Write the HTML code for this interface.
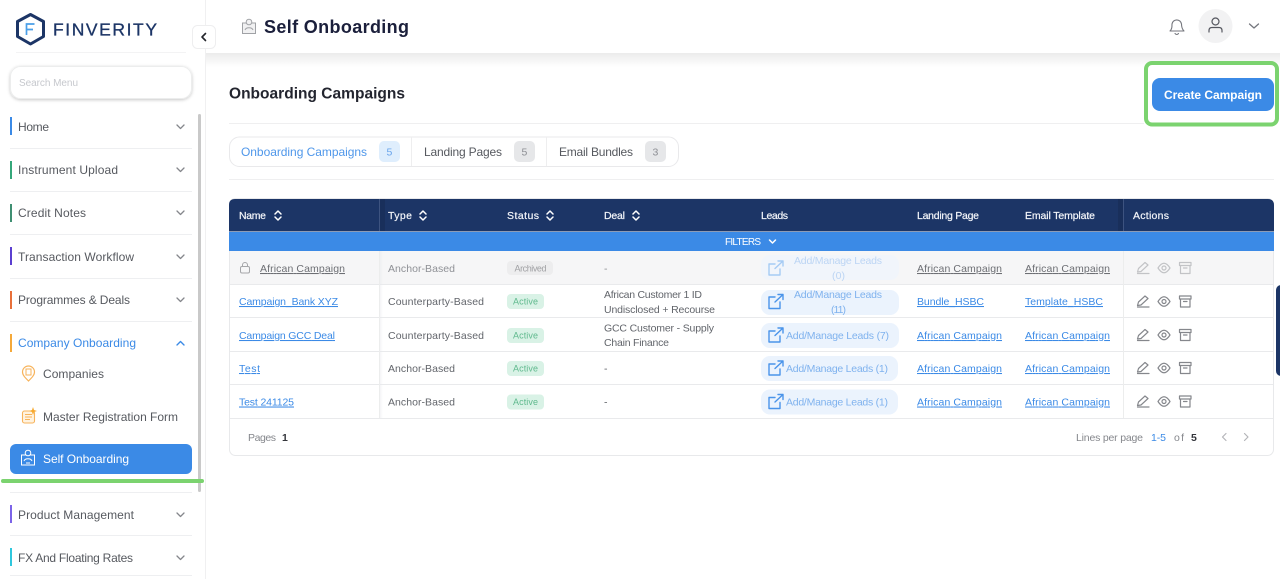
<!DOCTYPE html>
<html><head><meta charset="utf-8"><title>Self Onboarding</title>
<style>
html,body{margin:0;padding:0;background:#fff;width:1280px;height:579px;overflow:hidden}
svg{display:block}
text{font-family:"Liberation Sans",sans-serif;font-size:10.5px;fill:#62656b}
.m{font-size:12px;fill:#56595f}
.h{font-size:10.5px;fill:#f4f6fa;stroke:#f4f6fa;stroke-width:.2px}
.l{font-size:10.5px;fill:#3b8ae6;text-decoration:underline}
.g{font-size:10.5px;fill:#6d6f74;text-decoration:underline}
.b{font-size:10.5px;fill:#7fb2ee}
.d{font-size:10.5px;fill:#8f9196}
.a{font-size:9px;fill:#5fb98d}
.n{fill:none;stroke:#85878c;stroke-width:1.2;stroke-linecap:round;stroke-linejoin:round}
.c{fill:none;stroke:#85878c;stroke-width:1.3;stroke-linecap:round;stroke-linejoin:round}
.ln{stroke:#eeeff1;stroke-width:1}
</style></head><body>
<svg width="1280" height="579" viewBox="0 0 1280 579" xmlns="http://www.w3.org/2000/svg">
<defs>
<linearGradient id="sh" x1="0" y1="0" x2="0" y2="1"><stop offset="0" stop-color="#ebebeb"/><stop offset="1" stop-color="#fff"/></linearGradient>
<linearGradient id="cs" x1="0" y1="0" x2="1" y2="0"><stop offset="0" stop-color="#e6e8ec"/><stop offset="1" stop-color="#e6e8ec" stop-opacity="0"/></linearGradient>
<filter id="s1" x="-10%" y="-30%" width="120%" height="170%"><feDropShadow dx="0" dy="1" stdDeviation="1.5" flood-color="#000" flood-opacity=".22"/></filter>
</defs>
<rect width="1280" height="579" fill="#fff"/>

<!-- header shadow -->
<rect x="206" y="53" width="1074" height="14" fill="url(#sh)"/>
<line x1="205.5" y1="0" x2="205.5" y2="579" stroke="#f0f0f1"/>

<!-- logo -->
<path d="M30.5 14.5 L43.5 21.5 V36.5 L30.5 44 L17.5 36.5 V21.5 Z" fill="none" stroke="#1c3566" stroke-width="3" stroke-linejoin="round"/>
<path d="M26.500 35 V24 H34.500 M26.500 29.500 H33" fill="none" stroke="#4a9fe8" stroke-width="1.700"/>
<text x="53" y="35.500" textLength="104" lengthAdjust="spacing" style="font-size:17.500px;fill:#1c3566;stroke:#1c3566;stroke-width:.3px">FINVERITY</text>
<line x1="16" y1="52.500" x2="186" y2="52.500" stroke="#f3f3f4"/>
<rect x="192.500" y="25.500" width="23" height="23" rx="5" fill="#fff" stroke="#eeeeef"/>
<path d="M205.500 33.500 L202 37 L205.500 40.500" fill="none" stroke="#23252b" stroke-width="1.600" stroke-linecap="round" stroke-linejoin="round"/>

<!-- search -->
<rect x="10.500" y="66.500" width="181" height="32" rx="10" fill="#fff" stroke="#eceded" filter="url(#s1)"/>
<text x="19" y="86" textLength="59" style="font-size:10px;fill:#c6c8cd">Search Menu</text>

<!-- scrollbar -->
<rect x="198" y="114" width="3" height="378" rx="1.500" fill="#c9c9c9"/>

<!-- menu -->
<rect x="10" y="117" width="2" height="18" fill="#3b8ae6"/>
<text class="m" x="18" y="131" textLength="31">Home</text>
<path class="c" d="M177 125 L180.500 128.500 L184 125"/>
<line class="ln" x1="10" y1="148.500" x2="192" y2="148.500"/>

<rect x="10" y="161" width="2" height="18" fill="#35a77a"/>
<text class="m" x="18" y="174" textLength="100">Instrument Upload</text>
<path class="c" d="M177 168 L180.500 171.500 L184 168"/>
<line class="ln" x1="10" y1="191.500" x2="192" y2="191.500"/>

<rect x="10" y="204" width="2" height="18" fill="#3f8f72"/>
<text class="m" x="18" y="217" textLength="68">Credit Notes</text>
<path class="c" d="M177 211 L180.500 214.500 L184 211"/>
<line class="ln" x1="10" y1="234.500" x2="192" y2="234.500"/>

<rect x="10" y="247" width="2" height="18" fill="#5b3fd0"/>
<text class="m" x="18" y="261" textLength="116">Transaction Workflow</text>
<path class="c" d="M177 255 L180.500 258.500 L184 255"/>
<line class="ln" x1="10" y1="278.500" x2="192" y2="278.500"/>

<rect x="10" y="291" width="2" height="18" fill="#e8703a"/>
<text class="m" x="18" y="304" textLength="112">Programmes &amp; Deals</text>
<path class="c" d="M177 298 L180.500 301.500 L184 298"/>
<line class="ln" x1="10" y1="321.500" x2="192" y2="321.500"/>

<rect x="10" y="334" width="2" height="18" fill="#f5a93a"/>
<text class="m" x="18" y="347" textLength="118" style="fill:#3b8ae6">Company Onboarding</text>
<path d="M177 345 L180.500 341.500 L184 345" fill="none" stroke="#3b8ae6" stroke-width="1.400" stroke-linecap="round" stroke-linejoin="round"/>

<!-- companies icon -->
<path d="M28.500 381 C25 377.500 22.500 375 22.500 372 A6 6 0 0 1 34.500 372 C34.500 375 32 377.500 28.500 381 Z" fill="none" stroke="#f7b35b" stroke-width="1.200"/>
<rect x="26" y="369" width="5" height="6" fill="none" stroke="#f7b35b" stroke-width="1"/>
<text class="m" x="43" y="378" textLength="61">Companies</text>

<!-- master form icon -->
<rect x="22.500" y="411" width="12" height="12" rx="2" fill="#fff3e0" stroke="#f7b35b" stroke-width="1.100"/>
<path d="M25 414.500 H32 M25 417 H32 M25 419.500 H30" stroke="#f7b35b" stroke-width="1"/>
<path d="M33 407 L34 410 L37 411 L34 412 L33 415 L32 412 L29 411 L32 410 Z" fill="#f7a92e"/>
<text class="m" x="43" y="421" textLength="135">Master Registration Form</text>

<!-- active item -->
<rect x="10" y="444" width="182" height="30" rx="6" fill="#3b8ae6"/>
<g fill="none" stroke="#fff" stroke-width="1">
<rect x="21.500" y="455" width="13" height="10"/>
<circle cx="28" cy="453" r="2.800" fill="#3b8ae6"/>
<path d="M24 461 C25 458 31 458 32 461 M26 463 H30"/>
</g>
<text x="43" y="463" textLength="86" style="font-size:12px;fill:#fff">Self Onboarding</text>
<rect x="1" y="479" width="203" height="4" rx="2" fill="#7bd36f"/>
<line class="ln" x1="10" y1="492.500" x2="192" y2="492.500"/>

<rect x="10" y="505" width="2" height="18" fill="#7c64e8"/>
<text class="m" x="18" y="519" textLength="116">Product Management</text>
<path class="c" d="M177 513 L180.500 516.500 L184 513"/>
<line class="ln" x1="10" y1="535.500" x2="192" y2="535.500"/>

<rect x="10" y="548" width="2" height="18" fill="#2fc7dd"/>
<text class="m" x="18" y="562" textLength="115">FX And Floating Rates</text>
<path class="c" d="M177 556 L180.500 559.500 L184 556"/>
<line class="ln" x1="10" y1="575.500" x2="192" y2="575.500"/>

<!-- page title -->
<g fill="none" stroke="#a0a2a6" stroke-width="1">
<rect x="242.500" y="23" width="13" height="10.500" fill="#f1f1f2"/>
<circle cx="249" cy="22" r="2.800" fill="#f1f1f2"/>
<path d="M245 30 C246 27 252 27 253 30"/>
</g>
<text x="264" y="33" textLength="145" style="font-size:18px;font-weight:bold;fill:#1b1f3b">Self Onboarding</text>

<!-- bell, avatar -->
<path d="M1170 31 C1172 29 1172 27 1172 24 A4.800 4.800 0 0 1 1181.500 24 C1181.500 27 1182 29 1184 31 Z M1175 33.500 Q1176.800 35.500 1178.500 33.500" fill="none" stroke="#74767d" stroke-width="1.100" stroke-linejoin="round" stroke-linecap="round"/>
<circle cx="1215.500" cy="26" r="17" fill="#f2f2f3"/>
<circle cx="1215.500" cy="21.500" r="3.500" fill="none" stroke="#55575f" stroke-width="1.200"/>
<path d="M1209 32 V30.500 Q1209 27.500 1212 27.500 H1219 Q1222 27.500 1222 30.500 V32" fill="none" stroke="#55575f" stroke-width="1.200" stroke-linecap="round"/>
<path d="M1249.500 24 L1254 28 L1258.500 24" fill="none" stroke="#74767d" stroke-width="1.300" stroke-linecap="round" stroke-linejoin="round"/>

<!-- section head -->
<text x="229" y="98.500" textLength="176" style="font-size:15.500px;font-weight:bold;fill:#23252f">Onboarding Campaigns</text>
<line x1="229" y1="123.500" x2="1144" y2="123.500" stroke="#efeff0"/>
<rect x="1146" y="63" width="131" height="61.500" rx="6" fill="#fff" stroke="#7bd36f" stroke-width="4"/>
<rect x="1152" y="78" width="122" height="33" rx="8" fill="#3b8ae6"/>
<text x="1164" y="99" textLength="98" style="font-size:12px;font-weight:bold;fill:#fff">Create Campaign</text>

<!-- tabs -->
<rect x="229.500" y="137" width="449" height="29.500" rx="10" fill="#fff" stroke="#e9e9eb"/>
<line x1="411.500" y1="137" x2="411.500" y2="166" stroke="#eeeeef"/>
<line x1="546.500" y1="137" x2="546.500" y2="166" stroke="#eeeeef"/>
<text x="241" y="156" textLength="126" style="font-size:12px;fill:#4f97ea">Onboarding Campaigns</text>
<rect x="379" y="141" width="21" height="21" rx="5" fill="#dfeefd"/>
<text x="386.500" y="155.500" style="font-size:10.500px;fill:#6aa5ec">5</text>
<text x="424" y="156" textLength="78" style="font-size:12px;fill:#56595f">Landing Pages</text>
<rect x="514" y="141" width="21" height="21" rx="5" fill="#e6e7e9"/>
<text x="521.500" y="155.500" style="font-size:10.500px;fill:#8d8f94">5</text>
<text x="559" y="156" textLength="74" style="font-size:12px;fill:#56595f">Email Bundles</text>
<rect x="645" y="141" width="21" height="21" rx="5" fill="#e6e7e9"/>
<text x="652.500" y="155.500" style="font-size:10.500px;fill:#8d8f94">3</text>
<line x1="229" y1="179.500" x2="1274" y2="179.500" stroke="#efeff0"/>

<!-- table frame -->
<rect x="229.500" y="198.500" width="1044" height="257" rx="6" fill="#fff" stroke="#e8e9eb"/>
<path d="M229 231 V205 Q229 199 235 199 H1268 Q1274 199 1274 205 V231 Z" fill="#1c3566"/>
<line x1="229" y1="231.500" x2="1274" y2="231.500" stroke="#8d9bb5"/>
<line x1="379.500" y1="199" x2="379.500" y2="231" stroke="#3d5380"/>
<rect x="380" y="199" width="5" height="32" fill="#16294f" opacity=".5"/>
<line x1="1123.500" y1="199" x2="1123.500" y2="231" stroke="#3d5380"/>
<rect x="1118" y="199" width="5" height="32" fill="#16294f" opacity=".5"/>

<text class="h" x="239" y="219" textLength="27">Name</text>
<path d="M275 214 L278 211 L281 214 M275 217 L278 220 L281 217" fill="none" stroke="#fff" stroke-width="1.500" stroke-linecap="round" stroke-linejoin="round"/>
<text class="h" x="388" y="219" textLength="24">Type</text>
<path d="M420 214 L423 211 L426 214 M420 217 L423 220 L426 217" fill="none" stroke="#fff" stroke-width="1.500" stroke-linecap="round" stroke-linejoin="round"/>
<text class="h" x="507" y="219" textLength="32">Status</text>
<path d="M547 214 L550 211 L553 214 M547 217 L550 220 L553 217" fill="none" stroke="#fff" stroke-width="1.500" stroke-linecap="round" stroke-linejoin="round"/>
<text class="h" x="604" y="219" textLength="21">Deal</text>
<path d="M633 214 L636 211 L639 214 M633 217 L636 220 L639 217" fill="none" stroke="#fff" stroke-width="1.500" stroke-linecap="round" stroke-linejoin="round"/>
<text class="h" x="761" y="219" textLength="27">Leads</text>
<text class="h" x="917" y="219" textLength="62">Landing Page</text>
<text class="h" x="1025" y="219" textLength="70">Email Template</text>
<text class="h" x="1133" y="219" textLength="36">Actions</text>

<!-- filters -->
<rect x="229" y="232" width="1045" height="19" fill="#3b8ae6"/>
<text x="725" y="245" textLength="36" style="font-size:10px;fill:#fff">FILTERS</text>
<path d="M769.500 240 L772.500 243 L775.500 240" fill="none" stroke="#fff" stroke-width="1.500" stroke-linecap="round" stroke-linejoin="round"/>

<!-- rows -->
<rect x="230" y="251" width="1043" height="33" fill="#f6f6f7"/>
<line x1="230" y1="284.500" x2="1273" y2="284.500" stroke="#e9eaec"/>
<line x1="230" y1="317.500" x2="1273" y2="317.500" stroke="#e9eaec"/>
<line x1="230" y1="351.500" x2="1273" y2="351.500" stroke="#e9eaec"/>
<line x1="230" y1="384.500" x2="1273" y2="384.500" stroke="#e9eaec"/>
<line x1="230" y1="418.500" x2="1273" y2="418.500" stroke="#e9eaec"/>
<rect x="379" y="251" width="4" height="167" fill="url(#cs)" opacity=".6"/>
<line x1="379.500" y1="251" x2="379.500" y2="418" stroke="#eceded"/>
<line x1="1123.500" y1="251" x2="1123.500" y2="418" stroke="#eceded"/>

<!-- row 1 -->
<rect x="240.500" y="266.500" width="9" height="6.500" rx="1.500" fill="none" stroke="#a5a6a9"/>
<path d="M242.500 266.500 V265 A2.500 2.500 0 0 1 247.500 265 V266.500" fill="none" stroke="#a5a6a9"/>
<text class="g" x="260" y="272" textLength="85">African Campaign</text>
<text class="d" x="388" y="272" textLength="67">Anchor-Based</text>
<rect x="507" y="261" width="46" height="14" rx="4" fill="#ededee"/>
<text x="514.500" y="271.300" textLength="32" style="font-size:9px;fill:#a0a1a4">Archived</text>
<text class="d" x="604" y="272">-</text>
<rect x="761" y="255" width="138" height="25" rx="9" fill="#f1f5fb"/>
<g fill="none" stroke="#a6cbf4" stroke-width="1.400" stroke-linecap="round" stroke-linejoin="round">
<path d="M775 264 H769 V275 H780 V269 M775 268.500 L783 261 M778 261 H783 V266"/>
</g>
<text x="794" y="264" textLength="88" style="font-size:10.500px;fill:#bcd5f4">Add/Manage Leads</text>
<text x="832" y="279" textLength="13" style="font-size:10.500px;fill:#bcd5f4">(0)</text>
<text class="g" x="917" y="272" textLength="85">African Campaign</text>
<text class="g" x="1025" y="272" textLength="85">African Campaign</text>
<g class="n" opacity=".45">
<path d="M1137.500 272 L1138.500 268.500 L1145 262.500 L1148 265 L1141 271.500 Z M1137.500 273.500 H1149"/>
<path d="M1158 268 Q1164 258.500 1170 268 Q1164 277.500 1158 268 Z"/><circle cx="1164" cy="268" r="2"/>
<path d="M1179.500 262.500 H1191 V265.500 H1179.500 Z M1180.500 265.500 V273.500 H1190 V265.500 M1183.500 268 H1187"/>
</g>

<!-- row 2 -->
<text class="l" x="239" y="305" textLength="99">Campaign_Bank XYZ</text>
<text x="388" y="305" textLength="96">Counterparty-Based</text>
<rect x="507" y="294" width="37" height="15" rx="4" fill="#d9f2e6"/>
<text class="a" x="513" y="304.500" textLength="25">Active</text>
<text x="604" y="298" textLength="98">African Customer 1 ID</text>
<text x="604" y="313" textLength="111">Undisclosed + Recourse</text>
<rect x="761" y="290" width="138" height="25" rx="9" fill="#ebf3fd"/>
<g fill="none" stroke="#4a94ea" stroke-width="1.400" stroke-linecap="round" stroke-linejoin="round">
<path d="M775 297 H769 V308.500 H780 V302 M775 302 L783 294.500 M778 294.500 H783 V299.500"/>
</g>
<text class="b" x="794" y="298" textLength="88">Add/Manage Leads</text>
<text class="b" x="831" y="313" textLength="15">(11)</text>
<text class="l" x="917" y="305" textLength="67">Bundle_HSBC</text>
<text class="l" x="1025" y="305" textLength="78">Template_HSBC</text>
<g class="n">
<path d="M1137.500 305.500 L1138.500 302 L1145 296 L1148 298.500 L1141 305 Z M1137.500 307 H1149"/>
<path d="M1158 301.500 Q1164 292 1170 301.500 Q1164 311 1158 301.500 Z"/><circle cx="1164" cy="301.500" r="2"/>
<path d="M1179.500 296 H1191 V299 H1179.500 Z M1180.500 299 V307 H1190 V299 M1183.500 301.500 H1187"/>
</g>

<!-- row 3 -->
<text class="l" x="239" y="339" textLength="96">Campaign GCC Deal</text>
<text x="388" y="339" textLength="96">Counterparty-Based</text>
<rect x="507" y="328" width="37" height="15" rx="4" fill="#d9f2e6"/>
<text class="a" x="513" y="338.500" textLength="25">Active</text>
<text x="604" y="331.500" textLength="110">GCC Customer - Supply</text>
<text x="604" y="346" textLength="65">Chain Finance</text>
<rect x="761" y="323" width="138" height="25" rx="9" fill="#ebf3fd"/>
<g fill="none" stroke="#4a94ea" stroke-width="1.400" stroke-linecap="round" stroke-linejoin="round">
<path d="M775 331 H769 V342 H780 V336 M775 335.500 L783 328 M778 328 H783 V333"/>
</g>
<text class="b" x="786" y="339" textLength="103">Add/Manage Leads (7)</text>
<text class="l" x="917" y="339" textLength="85">African Campaign</text>
<text class="l" x="1025" y="339" textLength="85">African Campaign</text>
<g class="n">
<path d="M1137.500 339 L1138.500 335.500 L1145 329.500 L1148 332 L1141 338.500 Z M1137.500 340.500 H1149"/>
<path d="M1158 335 Q1164 325.500 1170 335 Q1164 344.500 1158 335 Z"/><circle cx="1164" cy="335" r="2"/>
<path d="M1179.500 329.500 H1191 V332.500 H1179.500 Z M1180.500 332.500 V340.500 H1190 V332.500 M1183.500 335 H1187"/>
</g>

<!-- row 4 -->
<text class="l" x="239" y="372" textLength="21">Test</text>
<text x="388" y="372" textLength="67">Anchor-Based</text>
<rect x="507" y="361" width="37" height="15" rx="4" fill="#d9f2e6"/>
<text class="a" x="513" y="371.500" textLength="25">Active</text>
<text x="604" y="372">-</text>
<rect x="761" y="356" width="137" height="25" rx="9" fill="#ebf3fd"/>
<g fill="none" stroke="#4a94ea" stroke-width="1.400" stroke-linecap="round" stroke-linejoin="round">
<path d="M775 364 H769 V375 H780 V369 M775 368.500 L783 361 M778 361 H783 V366"/>
</g>
<text class="b" x="786" y="372" textLength="102">Add/Manage Leads (1)</text>
<text class="l" x="917" y="372" textLength="85">African Campaign</text>
<text class="l" x="1025" y="372" textLength="85">African Campaign</text>
<g class="n">
<path d="M1137.500 372 L1138.500 368.500 L1145 362.500 L1148 365 L1141 371.500 Z M1137.500 373.500 H1149"/>
<path d="M1158 368 Q1164 358.500 1170 368 Q1164 377.500 1158 368 Z"/><circle cx="1164" cy="368" r="2"/>
<path d="M1179.500 362.500 H1191 V365.500 H1179.500 Z M1180.500 365.500 V373.500 H1190 V365.500 M1183.500 368 H1187"/>
</g>

<!-- row 5 -->
<text class="l" x="239" y="405.500" textLength="55">Test 241125</text>
<text x="388" y="405.500" textLength="67">Anchor-Based</text>
<rect x="507" y="394.500" width="37" height="15" rx="4" fill="#d9f2e6"/>
<text class="a" x="513" y="405" textLength="25">Active</text>
<text x="604" y="405.500">-</text>
<rect x="761" y="389.500" width="137" height="25" rx="9" fill="#ebf3fd"/>
<g fill="none" stroke="#4a94ea" stroke-width="1.400" stroke-linecap="round" stroke-linejoin="round">
<path d="M775 397.500 H769 V408.500 H780 V402.500 M775 402 L783 394.500 M778 394.500 H783 V399.500"/>
</g>
<text class="b" x="786" y="405.500" textLength="102">Add/Manage Leads (1)</text>
<text class="l" x="917" y="405.500" textLength="85">African Campaign</text>
<text class="l" x="1025" y="405.500" textLength="85">African Campaign</text>
<g class="n">
<path d="M1137.500 405.500 L1138.500 402 L1145 396 L1148 398.500 L1141 405 Z M1137.500 407 H1149"/>
<path d="M1158 401.500 Q1164 392 1170 401.500 Q1164 411 1158 401.500 Z"/><circle cx="1164" cy="401.500" r="2"/>
<path d="M1179.500 396 H1191 V399 H1179.500 Z M1180.500 399 V407 H1190 V399 M1183.500 401.500 H1187"/>
</g>

<!-- footer -->
<text x="248" y="441" textLength="28" style="font-size:10.500px;fill:#85878c">Pages</text>
<text x="282" y="441" style="font-size:10.500px;fill:#33353b;font-weight:bold">1</text>
<text x="1076" y="441" textLength="67" style="font-size:10.500px;fill:#85878c">Lines per page</text>
<text x="1151" y="441" textLength="15" style="font-size:10.500px;fill:#3b8ae6">1-5</text>
<text x="1174" y="441" textLength="10" style="font-size:10.500px;fill:#85878c">of</text>
<text x="1191" y="441" style="font-size:10.500px;fill:#33353b;font-weight:bold">5</text>
<path d="M1226 433.500 L1222.500 437 L1226 440.500" fill="none" stroke="#b4b5b9" stroke-width="1.200" stroke-linecap="round" stroke-linejoin="round"/>
<path d="M1244.500 433.500 L1248 437 L1244.500 440.500" fill="none" stroke="#b4b5b9" stroke-width="1.200" stroke-linecap="round" stroke-linejoin="round"/>

<!-- right edge widget -->
<rect x="1276" y="285" width="10" height="91" rx="5" fill="#1c3566"/>
</svg>
</body></html>
